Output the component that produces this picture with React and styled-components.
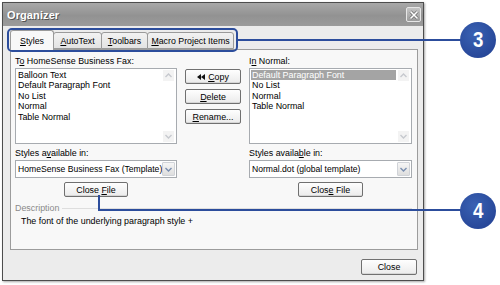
import styled, { createGlobalStyle } from "styled-components"

const GlobalStyle = createGlobalStyle`
html, body { margin:0; padding:0; background:#fff; }
body { font-family: "Liberation Sans", Arial, sans-serif; }
`

const Page = styled.div`
position:relative;
width:500px;
height:285px;
overflow:hidden;
background:#fff;
`
const Window = styled.div`
margin:2px 0 0 2px;
width:422px;
height:279px;
box-sizing:border-box;
border:1px solid #4d4d4d;
box-shadow:1px 1px 2px rgba(0,0,0,.35);
display:flex;
flex-direction:column;
background:#ececec;
`
const TitleBar = styled.div`
height:23px;
box-sizing:border-box;
display:flex;
align-items:center;
justify-content:space-between;
padding:0 2px 0 4px;
background:linear-gradient(#a8a8a8, #929292 55%, #9b9b9b);
`
const Title = styled.span`
font-weight:bold;
font-size:11px;
color:#fff;
letter-spacing:.1px;
text-shadow:1px 1px 0 #555;
`
const CloseX = styled.div`
width:15px;
height:15px;
box-sizing:border-box;
border:1px solid #e6e6e6;
border-radius:2px;
background:linear-gradient(#c4c4c4, #9c9c9c);
display:flex;
align-items:center;
justify-content:center;
`
const Body = styled.div`
flex:1;
display:flex;
flex-direction:column;
padding:4px 5px 5px 7px;
`
const Tabs = styled.div`
display:flex;
align-items:flex-end;
height:19px;
position:relative;
z-index:1;
`
const Tab = styled.div`
width:${p => p.$w}px;
height:${p => (p.$active ? 20 : 17)}px;
box-sizing:border-box;
border:1px solid #9a9a9a;
border-bottom:${p => (p.$active ? "none" : "1px solid #9a9a9a")};
border-radius:3px 3px 0 0;
margin-left:${p => (p.$active ? 0 : -1)}px;
margin-bottom:${p => (p.$active ? -1 : 0)}px;
background:${p => (p.$active ? "#f8f8f8" : "linear-gradient(#f2f2f2, #e3e3e3)")};
font-size:8.8px;
display:flex;
align-items:center;
justify-content:center;
white-space:nowrap;
`
const Panel = styled.div`
height:201px;
box-sizing:border-box;
border:1px solid #9c9c9c;
background:#f8f8f8;
padding:6px 5px 0 4px;
display:flex;
flex-direction:column;
`
const Columns = styled.div`
display:grid;
grid-template-columns:162px 56px 163px;
column-gap:8px;
`
const Col = styled.div`
display:flex;
flex-direction:column;
`
const Middle = styled.div`
display:flex;
flex-direction:column;
gap:5px;
padding-top:13px;
`
const Label = styled.div`
font-size:8.9px;
line-height:11px;
height:11px;
margin-top:${p => p.$mt || 0}px;
white-space:nowrap;
`
const U = styled.span`
text-decoration:underline;
`
const ListBox = styled.div`
height:76px;
margin-top:1px;
box-sizing:border-box;
border:1px solid #a7abb0;
background:#fff;
display:flex;
`
const Items = styled.div`
flex:1;
padding:1px 2px 0 1px;
`
const Item = styled.div`
font-size:8.9px;
line-height:10.4px;
padding-left:1px;
white-space:nowrap;
background:${p => (p.$sel ? "#a4a4a4" : "transparent")};
color:${p => (p.$sel ? "#fff" : "#000")};
width:${p => (p.$sel ? "144px" : "auto")};
`
const Scroll = styled.div`
width:12px;
display:flex;
flex-direction:column;
justify-content:space-between;
padding:1px 1px 1px 0;
`
const Arrow = styled.div`
width:11px;
height:11px;
display:flex;
align-items:center;
justify-content:center;
background:#f3f3f3;
`
const Combo = styled.div`
margin-top:1px;
height:18px;
box-sizing:border-box;
border:1px solid #a7abb0;
background:#fff;
display:flex;
align-items:center;
justify-content:space-between;
padding:0 1px 0 2px;
font-size:8.6px;
white-space:nowrap;
`
const DropBtn = styled.div`
width:13px;
height:14px;
box-sizing:border-box;
border:1px solid #d0d3d8;
border-radius:1px;
background:linear-gradient(#f6f6f6, #dedede);
display:flex;
align-items:center;
justify-content:center;
`
const Button = styled.div`
width:${p => p.$w || 56}px;
height:${p => p.$h || 15}px;
box-sizing:border-box;
border:1px solid #707070;
border-radius:2px;
background:linear-gradient(#fefefe, #ebebeb);
box-shadow:inset 0 -1px 0 #d6d6d6;
font-size:8.9px;
display:flex;
align-items:center;
justify-content:center;
gap:3px;
align-self:${p => p.$align || "auto"};
margin-top:${p => p.$mt || 0}px;
white-space:nowrap;
`
const DescRow = styled.div`
margin-top:6px;
display:flex;
align-items:center;
gap:3px;
height:10px;
`
const DescLabel = styled.span`
font-size:8.9px;
color:#8a8a8a;
`
const DescLine = styled.div`
flex:1;
height:1px;
background:#dedede;
`
const DescText = styled.div`
margin-top:3px;
padding-left:6px;
font-size:8.9px;
line-height:11px;
`
const Footer = styled.div`
margin-top:9px;
display:flex;
justify-content:flex-end;
padding-right:1px;
`
const Callout = styled.div`
position:absolute;
left:${p => p.$x}px;
top:${p => p.$y}px;
width:${p => p.$w}px;
height:${p => p.$h}px;
background:#2c4d9c;
`
const Frame = styled.div`
position:absolute;
left:7px;
top:28px;
width:231px;
height:24px;
box-sizing:border-box;
border:2px solid #2c4d9c;
border-radius:5px;
`
const Badge = styled.div`
position:absolute;
left:460px;
top:${p => p.$y}px;
width:36px;
height:36px;
border-radius:50%;
background:radial-gradient(circle at 40% 35%, #3a62b3, #28489a 70%);
color:#fff;
font-weight:bold;
font-size:22px;
display:flex;
align-items:center;
justify-content:center;
`
const Digit = styled.span`
display:inline-block;
transform:scaleX(.85);
`

const Up = () => (
   <svg width="7" height="5" viewBox="0 0 7 5"><path d="M0.5 4 L3.5 1 L6.5 4" fill="none" stroke="#c6c9ce" strokeWidth="1.4" /></svg>
)
const Down = ({ color = "#c6c9ce" }) => (
   <svg width="7" height="5" viewBox="0 0 7 5"><path d="M0.5 1 L3.5 4 L6.5 1" fill="none" stroke={color} strokeWidth="1.4" /></svg>
)

const List = ({ items, sel }) => (
   <ListBox>
      <Items>
         {items.map((it, i) => (
            <Item key={i} $sel={i === sel}>{it}</Item>
         ))}
      </Items>
      <Scroll>
         <Arrow><Up /></Arrow>
         <Arrow><Down /></Arrow>
      </Scroll>
   </ListBox>
)

const App = () => {
   return (
      <Page>
         <GlobalStyle />
         <Window>
            <TitleBar>
               <Title>Organizer</Title>
               <CloseX>
                  <svg width="10" height="10" viewBox="0 0 10 10">
                     <path d="M1.5 1.5 L8.5 8.5 M8.5 1.5 L1.5 8.5" stroke="#6a6a6a" strokeWidth="3" />
                     <path d="M1.5 1.5 L8.5 8.5 M8.5 1.5 L1.5 8.5" stroke="#fff" strokeWidth="1.6" />
                  </svg>
               </CloseX>
            </TitleBar>
            <Body>
               <Tabs>
                  <Tab $active $w={44}><span><U>S</U>tyles</span></Tab>
                  <Tab $w={49}><span><U>A</U>utoText</span></Tab>
                  <Tab $w={47}><span><U>T</U>oolbars</span></Tab>
                  <Tab $w={87}><span><U>M</U>acro Project Items</span></Tab>
               </Tabs>
               <Panel>
                  <Columns>
                     <Col>
                        <Label>T<U>o</U> HomeSense Business Fax:</Label>
                        <List items={["Balloon Text", "Default Paragraph Font", "No List", "Normal", "Table Normal"]} />
                        <Label $mt={4}>Styles a<U>v</U>ailable in:</Label>
                        <Combo>
                           <span>HomeSense Business Fax (Template)</span>
                           <DropBtn><Down color="#7a8fb0" /></DropBtn>
                        </Combo>
                        <Button $w={64} $align="center" $mt={4}><span>Close <U>F</U>ile</span></Button>
                     </Col>
                     <Middle>
                        <Button>
                           <svg width="8" height="6" viewBox="0 0 8 6"><path d="M0 3 L4 0 L4 6 Z M4 3 L8 0 L8 6 Z" fill="#111" /></svg>
                           <span><U>C</U>opy</span>
                        </Button>
                        <Button><span><U>D</U>elete</span></Button>
                        <Button><span><U>R</U>ename...</span></Button>
                     </Middle>
                     <Col>
                        <Label>I<U>n</U> Normal:</Label>
                        <List items={["Default Paragraph Font", "No List", "Normal", "Table Normal"]} sel={0} />
                        <Label $mt={4}>Styles availa<U>b</U>le in:</Label>
                        <Combo>
                           <span>Normal.dot (global template)</span>
                           <DropBtn><Down color="#7a8fb0" /></DropBtn>
                        </Combo>
                        <Button $w={65} $align="center" $mt={4}><span>Clos<U>e</U> File</span></Button>
                     </Col>
                  </Columns>
                  <DescRow>
                     <DescLabel>Description</DescLabel>
                     <DescLine />
                  </DescRow>
                  <DescText>The font of the underlying paragraph style +</DescText>
               </Panel>
               <Footer>
                  <Button $h={16}><span>Close</span></Button>
               </Footer>
            </Body>
         </Window>
         <Frame />
         <Callout $x={238} $y={39} $w={224} $h={2} />
         <Badge $y={22}><Digit>3</Digit></Badge>
         <Callout $x={98} $y={195} $w={2} $h={16} />
         <Callout $x={98} $y={209} $w={364} $h={2} />
         <Badge $y={193}><Digit>4</Digit></Badge>
      </Page>
   )
}

export default App
